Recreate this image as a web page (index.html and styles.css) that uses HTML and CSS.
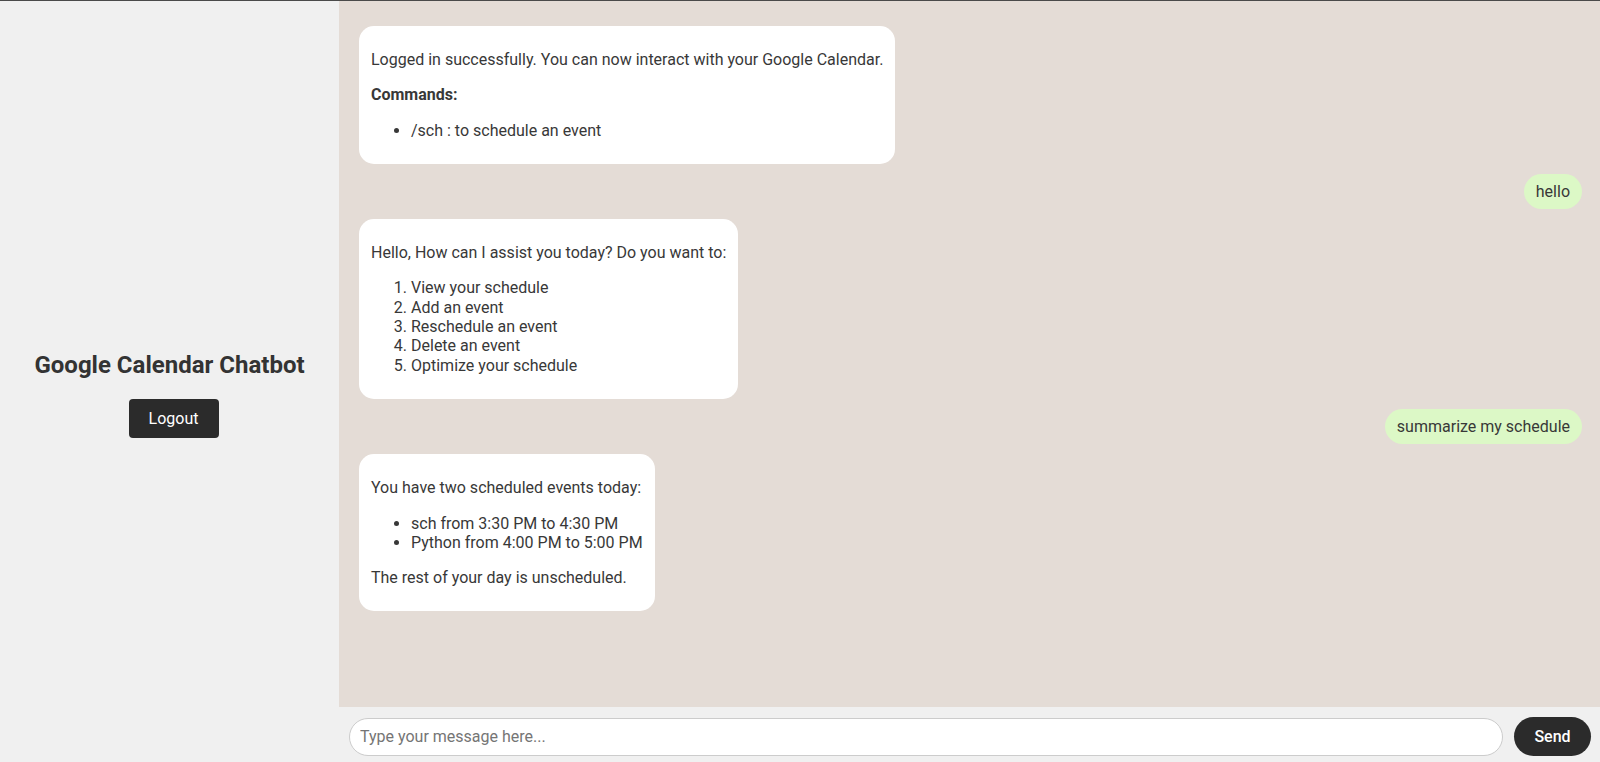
FILE: index.html
```html
<!DOCTYPE html>
<html lang="en">
<head>
<meta charset="utf-8">
<title>Google Calendar Chatbot</title>
<link rel="stylesheet" href="styles.css">
</head>
<body>
<div class="app">
  <aside class="sidebar">
    <h2 class="title">Google Calendar Chatbot</h2>
    <button class="logout">Logout</button>
  </aside>
  <main class="chat">
    <div class="messages">
      <div class="msg bot">
        <p>Logged in successfully. You can now interact with your Google Calendar.</p>
        <p><strong>Commands:</strong></p>
        <ul>
          <li>/sch : to schedule an event</li>
        </ul>
      </div>
      <div class="msg user">hello</div>
      <div class="msg bot">
        <p>Hello, How can I assist you today? Do you want to:</p>
        <ol>
          <li>View your schedule</li>
          <li>Add an event</li>
          <li>Reschedule an event</li>
          <li>Delete an event</li>
          <li>Optimize your schedule</li>
        </ol>
      </div>
      <div class="msg user">summarize my schedule</div>
      <div class="msg bot">
        <p>You have two scheduled events today:</p>
        <ul>
          <li>sch from 3:30 PM to 4:30 PM</li>
          <li>Python from 4:00 PM to 5:00 PM</li>
        </ul>
        <p>The rest of your day is unscheduled.</p>
      </div>
    </div>
    <form class="composer" onsubmit="return false;">
      <input class="input" type="text" placeholder="Type your message here...">
      <button class="send" type="submit">Send</button>
    </form>
  </main>
</div>
</body>
</html>
```
FILE: styles.css
```css
* { box-sizing: border-box; }
html, body { height: 100%; }
body {
  margin: 0;
  font-family: Roboto, "Liberation Sans", Arial, sans-serif;
  color: #333;
  border-top: 1px solid #4a4a4a;
  overflow: hidden;
}
.app {
  display: flex;
  height: 761px;
}
.sidebar {
  width: 339px;
  flex-shrink: 0;
  background: #f0f0f0;
  display: flex;
  flex-direction: column;
  align-items: center;
  justify-content: center;
  padding-top: 25px;
}
.title {
  margin: 0 0 20px;
  font-size: 24px;
  font-weight: 700;
  line-height: 28px;
  color: #333;
}
.logout {
  width: 90px;
  height: 39px;
  margin-left: 8px;
  background: #2b2b2b;
  color: #fff;
  border: none;
  border-radius: 4px;
  font-family: Roboto, "Liberation Sans", Arial, sans-serif;
  font-size: 16px;
}
.chat {
  flex: 1;
  display: flex;
  flex-direction: column;
  background: #f0f0f0;
}
.messages {
  flex: 1;
  background: #e4dcd6;
  padding: 25px 18px 20px 20px;
  display: flex;
  flex-direction: column;
  align-items: flex-start;
  gap: 10px;
}
.msg {
  font-size: 16px;
  line-height: 19.3px;
  color: #383838;
}
.msg p { margin: 16px 0; }
.msg ul, .msg ol { margin: 16px 0; padding-left: 40px; }
.bot {
  background: #fff;
  border-radius: 15px;
  padding: 8px 12px;
}
.user {
  align-self: flex-end;
  background: #dcf8c6;
  border-radius: 18px;
  padding: 8px 12px;
}
.composer {
  height: 55px;
  flex-shrink: 0;
  display: flex;
  align-items: center;
  gap: 11px;
  padding: 10px 9px 6px 10px;
  margin: 0;
}
.input {
  flex: 1;
  height: 38px;
  border: 1px solid #ccc;
  border-radius: 20px;
  padding: 0 10px;
  font-family: Roboto, "Liberation Sans", Arial, sans-serif;
  font-size: 16px;
  color: #333;
  background: #fff;
  outline: none;
}
.input::placeholder { color: #757575; }
.send {
  width: 77px;
  height: 39px;
  border: none;
  border-radius: 20px;
  background: #2b2b2b;
  color: #fff;
  font-family: Roboto, "Liberation Sans", Arial, sans-serif;
  font-size: 16px;
  font-weight: 500;
}
```
